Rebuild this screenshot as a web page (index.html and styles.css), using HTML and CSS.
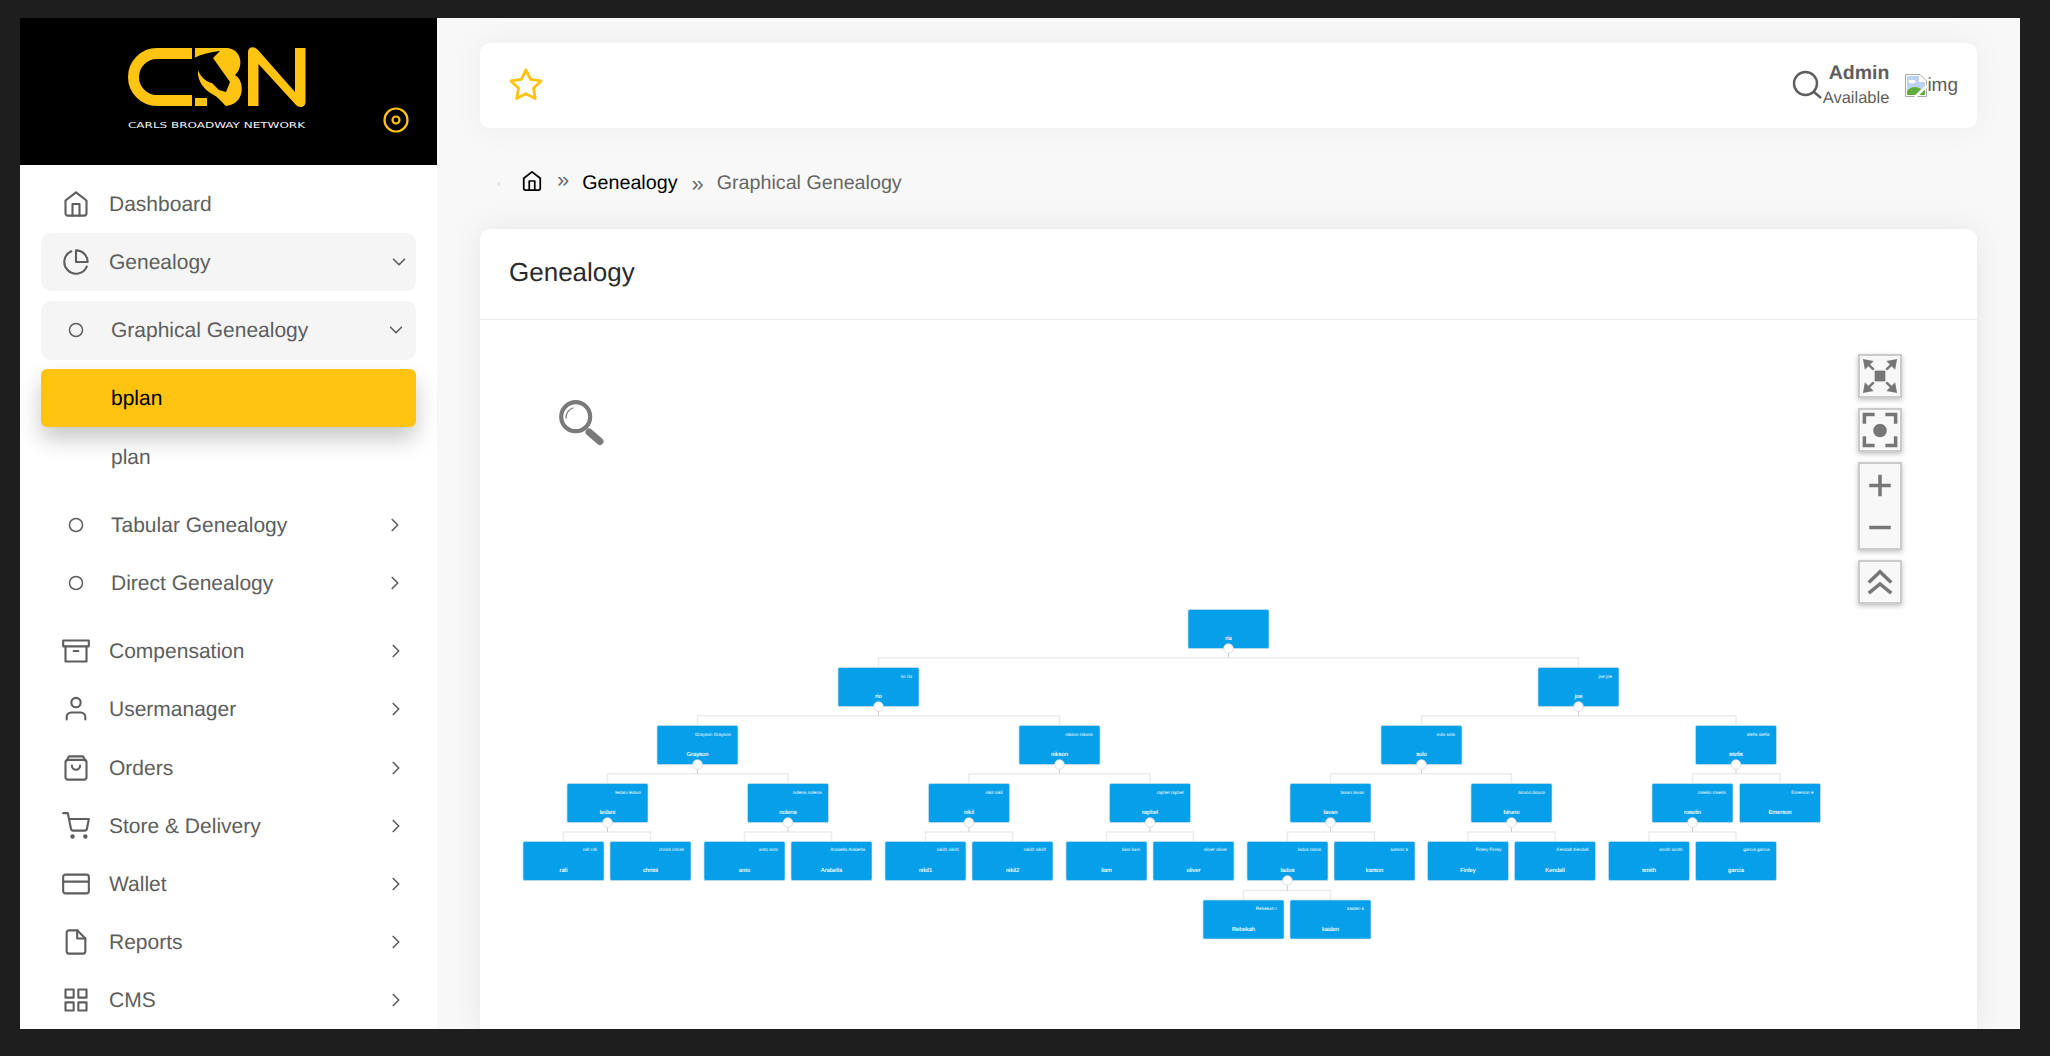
FILE: index.html
```html
<!DOCTYPE html>
<html lang="en">
  <head>
    <meta charset="UTF-8" />
    <meta name="viewport" content="width=device-width, initial-scale=1.0" />
    <title>Genealogy</title>
    <link rel="stylesheet" href="styles.css">
  </head>
  <body>
    <div class="app">
      <aside class="sidebar">
        <div class="sidebar-head">
          <svg class="logo" viewBox="20 18 417 147" width="417" height="147">
            <path class="logo-c" d="M192 53.5H157a23.5 23.5 0 0 0 0 47H192"/>
            <path class="logo-y" d="M195 48H226C237 48 242 58 240 66C239 70 238 72 235 75C245 80 246 106 224 106H195V98H194Z"/>
            <path class="logo-k" d="M194 58C202 54 210 52 220 51L213 58L230 82L226 92L219 90L212 83C206 82 200 76 198 70L194 70Z"/>
            <path class="logo-k" d="M194 70H198C197 82 205 90 212 94C218 97 222 102 226 106.500H207V98H194Z"/>
            <path class="logo-y" d="M248 52C248 46 255 46 258 50L295 92V48H305.500V102C305.500 108 299 108 296 105L258.500 64V106H248Z"/>
            <text class="logo-text" x="128" y="127.700" textLength="177" lengthAdjust="spacingAndGlyphs">CARLS BROADWAY NETWORK</text>
            <circle class="logo-ring" cx="396" cy="120" r="11.500"/>
            <circle class="logo-ring" cx="396" cy="120" r="3.500"/>
          </svg>
        </div>
        <nav class="menu">
          <a class="row">
            <svg class="ico" viewBox="0 0 24 24"><path d="M3 9l9-7 9 7v11a2 2 0 0 1-2 2H5a2 2 0 0 1-2-2z"/><polyline points="9 22 9 12 15 12 15 22"/></svg>
            <span>Dashboard</span>
          </a>
          <a class="row open">
            <svg class="ico" viewBox="0 0 24 24"><path d="M21.21 15.89A10 10 0 1 1 8 2.83"/><path d="M22 12A10 10 0 0 0 12 2v10z"/></svg>
            <span>Genealogy</span>
            <svg class="chev chev-top" viewBox="0 0 24 24"><polyline points="6 9 12 15 18 9"/></svg>
          </a>
          <div class="submenu">
            <a class="row sub open">
              <svg class="dot" viewBox="0 0 16 16"><circle cx="8" cy="8" r="6.500"/></svg>
              <span>Graphical Genealogy</span>
              <svg class="chev chev-sub" viewBox="0 0 24 24"><polyline points="6 9 12 15 18 9"/></svg>
            </a>
            <a class="row leaf active"><span>bplan</span></a>
            <a class="row leaf"><span>plan</span></a>
            <a class="row sub tabular">
              <svg class="dot" viewBox="0 0 16 16"><circle cx="8" cy="8" r="6.500"/></svg>
              <span>Tabular Genealogy</span>
              <svg class="chev" viewBox="0 0 24 24"><polyline points="9 18 15 12 9 6"/></svg>
            </a>
            <a class="row sub">
              <svg class="dot" viewBox="0 0 16 16"><circle cx="8" cy="8" r="6.500"/></svg>
              <span>Direct Genealogy</span>
              <svg class="chev" viewBox="0 0 24 24"><polyline points="9 18 15 12 9 6"/></svg>
            </a>
          </div>
          <a class="row">
            <svg class="ico" viewBox="0 0 24 24"><polyline points="21 8 21 21 3 21 3 8"/><rect x="1" y="3" width="22" height="5"/><line x1="10" y1="12" x2="14" y2="12"/></svg>
            <span>Compensation</span>
            <svg class="chev" viewBox="0 0 24 24"><polyline points="9 18 15 12 9 6"/></svg>
          </a>
          <a class="row">
            <svg class="ico" viewBox="0 0 24 24"><path d="M20 21v-2a4 4 0 0 0-4-4H8a4 4 0 0 0-4 4v2"/><circle cx="12" cy="6.500" r="4"/></svg>
            <span>Usermanager</span>
            <svg class="chev" viewBox="0 0 24 24"><polyline points="9 18 15 12 9 6"/></svg>
          </a>
          <a class="row">
            <svg class="ico" viewBox="0 0 24 24"><rect x="3" y="5" width="18" height="17" rx="2"/><path d="M4 5.500L6 2H18L20 5.500"/><path d="M8.500 10a3.500 3.500 0 0 0 7 0"/></svg>
            <span>Orders</span>
            <svg class="chev" viewBox="0 0 24 24"><polyline points="9 18 15 12 9 6"/></svg>
          </a>
          <a class="row">
            <svg class="ico" viewBox="0 0 24 24"><circle cx="9" cy="21" r="1"/><circle cx="20" cy="21" r="1"/><path d="M1 1h4l2.680 13.390a2 2 0 0 0 2 1.610h9.720a2 2 0 0 0 2-1.610L23 6H6"/></svg>
            <span>Store &amp; Delivery</span>
            <svg class="chev" viewBox="0 0 24 24"><polyline points="9 18 15 12 9 6"/></svg>
          </a>
          <a class="row">
            <svg class="ico" viewBox="0 0 24 24"><rect x="1" y="4" width="22" height="16" rx="2"/><line x1="1" y1="10" x2="23" y2="10"/></svg>
            <span>Wallet</span>
            <svg class="chev" viewBox="0 0 24 24"><polyline points="9 18 15 12 9 6"/></svg>
          </a>
          <a class="row">
            <svg class="ico" viewBox="0 0 24 24"><path d="M13 2H6a2 2 0 0 0-2 2v16a2 2 0 0 0 2 2h12a2 2 0 0 0 2-2V9z"/><polyline points="13 2 13 9 20 9"/></svg>
            <span>Reports</span>
            <svg class="chev" viewBox="0 0 24 24"><polyline points="9 18 15 12 9 6"/></svg>
          </a>
          <a class="row">
            <svg class="ico" viewBox="0 0 24 24"><rect x="3" y="3" width="7" height="7"/><rect x="14" y="3" width="7" height="7"/><rect x="14" y="14" width="7" height="7"/><rect x="3" y="14" width="7" height="7"/></svg>
            <span>CMS</span>
            <svg class="chev" viewBox="0 0 24 24"><polyline points="9 18 15 12 9 6"/></svg>
          </a>
        </nav>
      </aside>

      <main class="main">
        <header class="topbar">
          <svg class="star" viewBox="0 0 24 24"><polygon points="12 2 15.090 8.260 22 9.270 17 14.140 18.180 21.020 12 17.770 5.820 21.020 7 14.140 2 9.270 8.910 8.260 12 2"/></svg>
          <div class="top-right">
            <svg class="top-search" viewBox="0 0 30 30"><circle cx="13.500" cy="13.500" r="11.500"/><line x1="22" y1="22" x2="29" y2="28"/></svg>
            <div class="user">
              <b>Admin</b>
              <span>Available</span>
            </div>
            <div class="broken">
              <svg viewBox="0 0 22 23" width="22" height="23">
                <path class="broken-page" d="M.5.5H15L21.500 7V22.500H.5Z"/>
                <path class="broken-sky" d="M2 2H14V8H20V15L13 21H2Z"/>
                <path class="broken-hill" d="M2 21V17C6 12 12 12 16 15L11 21Z"/>
                <path class="broken-hill" d="M14 21L20 15V21Z"/>
                <ellipse class="broken-cloud" cx="7" cy="7.500" rx="3.500" ry="1.800"/>
                <line class="broken-tear" x1="10" y1="23" x2="22" y2="12"/>
              </svg>
              <span>img</span>
            </div>
          </div>
        </header>

        <div class="crumbs">
          <i class="crumb-mark"></i>
          <svg class="crumb-home" viewBox="0 0 24 24"><path d="M3 9l9-7 9 7v11a2 2 0 0 1-2 2H5a2 2 0 0 1-2-2z"/><polyline points="9 22 9 12 15 12 15 22"/></svg>
          <span class="crumb-sep first">»</span>
          <span class="crumb-link">Genealogy</span>
          <span class="crumb-sep">»</span>
          <span class="crumb-now">Graphical Genealogy</span>
        </div>

        <section class="card">
          <div class="card-head">Genealogy</div>
          <div class="card-body">
            <svg class="tree" viewBox="480 320 1497 709" width="1497" height="709">
              <!-- magnifier -->
              <g class="lens">
                <circle cx="575.700" cy="416.700" r="14.500"/>
                <path class="lens-shine" d="M566 418a10 10 0 0 1 7-10"/>
                <line x1="589" y1="432" x2="600" y2="441.500"/>
              </g>

              <!-- links -->
              <path class="link" d="M878.500 667.500V657.700H1578.500V667.500"/>
              <path class="link" d="M697.500 725.500V715.700H1059.500V725.500"/>
              <path class="link" d="M1421.500 725.500V715.700H1736V725.500"/>
              <path class="link" d="M607.500 783.500V773.700H788V783.500"/>
              <path class="link" d="M969 783.500V773.700H1150V783.500"/>
              <path class="link" d="M1330.500 783.500V773.700H1511.500V783.500"/>
              <path class="link" d="M1692.500 783.500V773.700H1780V783.500"/>
              <path class="link" d="M563.500 841.500V832H650.500V841.500"/>
              <path class="link" d="M744.500 841.500V832H831.500V841.500"/>
              <path class="link" d="M925.500 841.500V832H1012.500V841.500"/>
              <path class="link" d="M1106.500 841.500V832H1193.500V841.500"/>
              <path class="link" d="M1287.500 841.500V832H1374.500V841.500"/>
              <path class="link" d="M1468 841.500V832H1555V841.500"/>
              <path class="link" d="M1649 841.500V832H1736V841.500"/>
              <path class="link" d="M1243.500 900V890.500H1330.500V900"/>
              <path class="stem" d="M1228.500 648V657.700M878.500 706V715.700M1578.500 706V715.700M697.500 764V773.700M1059.500 764V773.700M1421.500 764V773.700M1736 764V773.700M607.500 822V832M788 822V832M969 822V832M1150 822V832M1330.500 822V832M1511.500 822V832M1692.500 822V832M1287.500 880V890.500"/>

              <!-- level 1 -->
              <g transform="translate(1188 609.500)"><rect class="node" width="81" height="39" rx="1.500"/><text class="name" x="40.500" y="30.700">ria</text></g>

              <!-- level 2 -->
              <g transform="translate(838 667.500)"><rect class="node" width="81" height="39" rx="1.500"/><text class="label" x="74" y="10">rio rio</text><text class="name" x="40.500" y="30.700">rio</text></g>
              <g transform="translate(1538 667.500)"><rect class="node" width="81" height="39" rx="1.500"/><text class="label" x="74" y="10">joe joe</text><text class="name" x="40.500" y="30.700">joe</text></g>

              <!-- level 3 -->
              <g transform="translate(657 725.500)"><rect class="node" width="81" height="39" rx="1.500"/><text class="label" x="74" y="10">Grayson Grayson</text><text class="name" x="40.500" y="30.700">Grayson</text></g>
              <g transform="translate(1019 725.500)"><rect class="node" width="81" height="39" rx="1.500"/><text class="label" x="74" y="10">nikson nikson</text><text class="name" x="40.500" y="30.700">nikson</text></g>
              <g transform="translate(1381 725.500)"><rect class="node" width="81" height="39" rx="1.500"/><text class="label" x="74" y="10">solo solo</text><text class="name" x="40.500" y="30.700">solo</text></g>
              <g transform="translate(1695.500 725.500)"><rect class="node" width="81" height="39" rx="1.500"/><text class="label" x="74" y="10">stefis stefis</text><text class="name" x="40.500" y="30.700">stefis</text></g>

              <!-- level 4 -->
              <g transform="translate(567 783.500)"><rect class="node" width="81" height="39" rx="1.500"/><text class="label" x="74" y="10">ledani ledani</text><text class="name" x="40.500" y="30.700">ledani</text></g>
              <g transform="translate(747.500 783.500)"><rect class="node" width="81" height="39" rx="1.500"/><text class="label" x="74" y="10">nolena nolena</text><text class="name" x="40.500" y="30.700">nolena</text></g>
              <g transform="translate(928.500 783.500)"><rect class="node" width="81" height="39" rx="1.500"/><text class="label" x="74" y="10">nikil nikil</text><text class="name" x="40.500" y="30.700">nikil</text></g>
              <g transform="translate(1109.500 783.500)"><rect class="node" width="81" height="39" rx="1.500"/><text class="label" x="74" y="10">raphel raphel</text><text class="name" x="40.500" y="30.700">raphel</text></g>
              <g transform="translate(1290 783.500)"><rect class="node" width="81" height="39" rx="1.500"/><text class="label" x="74" y="10">lavan lavan</text><text class="name" x="40.500" y="30.700">lavan</text></g>
              <g transform="translate(1471 783.500)"><rect class="node" width="81" height="39" rx="1.500"/><text class="label" x="74" y="10">biruno biruno</text><text class="name" x="40.500" y="30.700">biruno</text></g>
              <g transform="translate(1652 783.500)"><rect class="node" width="81" height="39" rx="1.500"/><text class="label" x="74" y="10">roselin roselin</text><text class="name" x="40.500" y="30.700">roselin</text></g>
              <g transform="translate(1739.500 783.500)"><rect class="node" width="81" height="39" rx="1.500"/><text class="label" x="74" y="10">Emerson e</text><text class="name" x="40.500" y="30.700">Emerson</text></g>

              <!-- level 5 -->
              <g transform="translate(523 841.500)"><rect class="node" width="81" height="39" rx="1.500"/><text class="label" x="74" y="9.500">rafi rafi</text><text class="name" x="40.500" y="30.700">rafi</text></g>
              <g transform="translate(610 841.500)"><rect class="node" width="81" height="39" rx="1.500"/><text class="label" x="74" y="9.500">christi christi</text><text class="name" x="40.500" y="30.700">christi</text></g>
              <g transform="translate(704 841.500)"><rect class="node" width="81" height="39" rx="1.500"/><text class="label" x="74" y="9.500">anto anto</text><text class="name" x="40.500" y="30.700">anto</text></g>
              <g transform="translate(791 841.500)"><rect class="node" width="81" height="39" rx="1.500"/><text class="label" x="74" y="9.500">Arabella Arabella</text><text class="name" x="40.500" y="30.700">Arabella</text></g>
              <g transform="translate(885 841.500)"><rect class="node" width="81" height="39" rx="1.500"/><text class="label" x="74" y="9.500">nikil1 nikil1</text><text class="name" x="40.500" y="30.700">nikil1</text></g>
              <g transform="translate(972 841.500)"><rect class="node" width="81" height="39" rx="1.500"/><text class="label" x="74" y="9.500">nikil2 nikil2</text><text class="name" x="40.500" y="30.700">nikil2</text></g>
              <g transform="translate(1066 841.500)"><rect class="node" width="81" height="39" rx="1.500"/><text class="label" x="74" y="9.500">liam liam</text><text class="name" x="40.500" y="30.700">liam</text></g>
              <g transform="translate(1153 841.500)"><rect class="node" width="81" height="39" rx="1.500"/><text class="label" x="74" y="9.500">oliver oliver</text><text class="name" x="40.500" y="30.700">oliver</text></g>
              <g transform="translate(1247 841.500)"><rect class="node" width="81" height="39" rx="1.500"/><text class="label" x="74" y="9.500">lados lados</text><text class="name" x="40.500" y="30.700">lados</text></g>
              <g transform="translate(1334 841.500)"><rect class="node" width="81" height="39" rx="1.500"/><text class="label" x="74" y="9.500">karson k</text><text class="name" x="40.500" y="30.700">karson</text></g>
              <g transform="translate(1427.500 841.500)"><rect class="node" width="81" height="39" rx="1.500"/><text class="label" x="74" y="9.500">Finley Finley</text><text class="name" x="40.500" y="30.700">Finley</text></g>
              <g transform="translate(1514.500 841.500)"><rect class="node" width="81" height="39" rx="1.500"/><text class="label" x="74" y="9.500">Kendall Kendall</text><text class="name" x="40.500" y="30.700">Kendall</text></g>
              <g transform="translate(1608.500 841.500)"><rect class="node" width="81" height="39" rx="1.500"/><text class="label" x="74" y="9.500">smith smith</text><text class="name" x="40.500" y="30.700">smith</text></g>
              <g transform="translate(1695.500 841.500)"><rect class="node" width="81" height="39" rx="1.500"/><text class="label" x="74" y="9.500">garcia garcia</text><text class="name" x="40.500" y="30.700">garcia</text></g>

              <!-- level 6 -->
              <g transform="translate(1203 900)"><rect class="node" width="81" height="39" rx="1.500"/><text class="label" x="74" y="9.500">Rebekah r</text><text class="name" x="40.500" y="30.700">Rebekah</text></g>
              <g transform="translate(1290 900)"><rect class="node" width="81" height="39" rx="1.500"/><text class="label" x="74" y="9.500">kaiden k</text><text class="name" x="40.500" y="30.700">kaiden</text></g>

              <!-- collapse buttons -->
              <circle class="knob" cx="1228.500" cy="648.500" r="4.800"/>
              <circle class="knob" cx="878.500" cy="706.500" r="4.800"/>
              <circle class="knob" cx="1578.500" cy="706.500" r="4.800"/>
              <circle class="knob" cx="697.500" cy="764.500" r="4.800"/>
              <circle class="knob" cx="1059.500" cy="764.500" r="4.800"/>
              <circle class="knob" cx="1421.500" cy="764.500" r="4.800"/>
              <circle class="knob" cx="1736" cy="764.500" r="4.800"/>
              <circle class="knob" cx="607.500" cy="822.500" r="4.800"/>
              <circle class="knob" cx="788" cy="822.500" r="4.800"/>
              <circle class="knob" cx="969" cy="822.500" r="4.800"/>
              <circle class="knob" cx="1150" cy="822.500" r="4.800"/>
              <circle class="knob" cx="1330.500" cy="822.500" r="4.800"/>
              <circle class="knob" cx="1511.500" cy="822.500" r="4.800"/>
              <circle class="knob" cx="1692.500" cy="822.500" r="4.800"/>
              <circle class="knob" cx="1287.500" cy="880.500" r="4.800"/>
            </svg>

            <div class="controls">
              <div class="ctrl">
                <svg viewBox="0 0 41 41">
                  <rect x="15" y="15" width="11" height="11"/>
                  <g><polygon points="3 3 14 5 5 14"/><line x1="8" y1="8" x2="14" y2="14"/></g>
                  <g transform="rotate(90 20.500 20.500)"><polygon points="3 3 14 5 5 14"/><line x1="8" y1="8" x2="14" y2="14"/></g>
                  <g transform="rotate(180 20.500 20.500)"><polygon points="3 3 14 5 5 14"/><line x1="8" y1="8" x2="14" y2="14"/></g>
                  <g transform="rotate(270 20.500 20.500)"><polygon points="3 3 14 5 5 14"/><line x1="8" y1="8" x2="14" y2="14"/></g>
                </svg>
              </div>
              <div class="ctrl">
                <svg viewBox="0 0 41 41">
                  <path class="open-line" d="M4.500 14V4.500H15M26 4.500H36.500V14M4.500 27V36.500H15M26 36.500H36.500V27"/>
                  <circle cx="20.500" cy="21" r="7"/>
                </svg>
              </div>
              <div class="ctrl ctrl-zoom">
                <svg viewBox="0 0 41 41"><path class="open-line" d="M9.500 21H31.500M20.500 10V32"/></svg>
                <svg viewBox="0 0 41 41"><path class="open-line" d="M9.500 21H31.500"/></svg>
              </div>
              <div class="ctrl">
                <svg viewBox="0 0 41 41"><path class="open-line" d="M9 21L20.500 10L32 21M9 32L20.500 22.500L32 32"/></svg>
              </div>
            </div>
          </div>
        </section>
      </main>
    </div>
  </body>
</html>
```

FILE: styles.css
```css
html,
body {
  margin: 0;
  height: 100%;
  font-family: "Liberation Sans", Arial, Helvetica, sans-serif;
  text-rendering: geometricPrecision;
  background-color: #1e1e1e;
  overflow: hidden;
}

.app {
  display: flex;
  width: 2000px;
  height: 1011px;
  margin: 18px 0 0 20px;
  overflow: hidden;
  background-color: #f8f8f8;
}

/* sidebar */
.sidebar {
  width: 417px;
  flex: none;
  background-color: white;
}

.sidebar-head {
  height: 147px;
  background-color: black;
}

.logo {
  display: block;
}

.logo-c {
  fill: none;
  stroke: #ffc312;
  stroke-width: 11;
}

.logo-y {
  fill: #ffc312;
}

.logo-k {
  fill: black;
}

.logo-text {
  fill: #f2f2f2;
  font-family: "DejaVu Sans", sans-serif;
  font-size: 8.200px;
}

.logo-ring {
  fill: none;
  stroke: #ffc312;
  stroke-width: 2.200;
}

.menu {
  display: flex;
  flex-direction: column;
  padding: 10px 21px 0;
}

.row {
  display: flex;
  align-items: center;
  height: 58.200px;
  flex: none;
  padding: 0 9px 0 21px;
  font-size: 21px;
  color: #5e5e5e;
  border-radius: 10px;
}

.row span {
  flex: 1;
  padding-top: 2px;
}

.row.open {
  background-color: #f5f5f5;
}

.ico {
  width: 28px;
  height: 28px;
  margin-right: 19px;
  flex: none;
  fill: none;
  stroke: #5e5e5e;
  stroke-width: 1.800;
  stroke-linecap: round;
  stroke-linejoin: round;
}

.chev {
  width: 22px;
  height: 22px;
  flex: none;
  fill: none;
  stroke: #5e5e5e;
  stroke-width: 1.800;
  stroke-linecap: round;
  stroke-linejoin: round;
}

.chev-top {
  margin-right: -3px;
}

.chev-sub {
  margin-right: -1px;
}

.submenu {
  display: flex;
  flex-direction: column;
  padding: 10px 0;
}

.sub {
  padding-left: 27px;
  padding-right: 10px;
}

.dot {
  width: 16px;
  height: 16px;
  margin-right: 27px;
  flex: none;
  fill: none;
  stroke: #5e5e5e;
  stroke-width: 1.500;
}

.sub.open {
  margin-bottom: 9px;
}

.leaf {
  padding-left: 70px;
}

.leaf.active {
  height: 58px;
  margin-bottom: 1px;
  color: black;
  background-color: #ffc312;
  border-radius: 6px;
  box-shadow: 0 12px 22px rgba(0, 0, 0, 0.22);
}

.tabular {
  margin-top: 10px;
}

/* main area */
.main {
  flex: 1;
  min-width: 0;
  display: flex;
  flex-direction: column;
  padding: 25px 43px 0;
}

.topbar {
  display: flex;
  align-items: center;
  justify-content: space-between;
  height: 85px;
  flex: none;
  padding: 0 19px 0 28px;
  background-color: white;
  border-radius: 10px;
  box-shadow: 0 0 30px rgba(0, 0, 0, 0.05);
}

.star {
  width: 36px;
  height: 36px;
  margin-top: -2px;
  fill: none;
  stroke: #ffc312;
  stroke-width: 1.900;
  stroke-linejoin: round;
}

.top-right {
  display: flex;
  align-items: center;
}

.top-search {
  width: 30px;
  height: 30px;
  margin: -1px 1px 0 0;
  fill: none;
  stroke: #5e5e5e;
  stroke-width: 2.400;
}

.user {
  display: flex;
  flex-direction: column;
  align-items: flex-end;
  color: #5e5e5e;
  font-size: 16.500px;
  line-height: 25px;
  margin-right: 16px;
}

.user b {
  font-size: 19.500px;
}

.broken {
  display: flex;
  align-items: center;
  color: #5e5e5e;
  font-size: 19px;
}

.broken svg {
  display: block;
}

.broken-page {
  fill: white;
  stroke: #aaa;
}

.broken-sky {
  fill: #bcd3f3;
}

.broken-hill {
  fill: #5fae3c;
}

.broken-cloud {
  fill: white;
}

.broken-tear {
  stroke: white;
  stroke-width: 2.500;
}

.crumbs {
  display: flex;
  align-items: center;
  height: 91px;
  flex: none;
  padding-top: 10px;
  font-size: 19.700px;
  color: #666;
}

.crumb-mark {
  width: 2px;
  height: 4px;
  margin: 0 21px 0 18px;
  background-color: #dfe6ea;
}

.crumb-home {
  width: 22px;
  height: 24px;
  margin-top: -6px;
  fill: none;
  stroke: black;
  stroke-width: 1.900;
  stroke-linejoin: round;
}

.crumb-sep {
  margin: 0 13px 0 14px;
  font-size: 22px;
}

.crumb-sep.first {
  margin-top: -7px;
}

.crumb-link {
  color: black;
}

.card {
  flex: 1;
  min-height: 0;
  display: flex;
  flex-direction: column;
  background-color: white;
  border-radius: 10px 10px 0 0;
  box-shadow: 0 0 30px rgba(0, 0, 0, 0.08);
}

.card-head {
  height: 87px;
  flex: none;
  display: flex;
  align-items: center;
  padding: 0 0 3px 29px;
  font-size: 26px;
  color: #2b2b2b;
  border-bottom: 1px solid #ececec;
}

.card-body {
  position: relative;
  flex: 1;
  min-height: 0;
  overflow: hidden;
}

/* tree canvas */
.tree {
  display: block;
}

.lens {
  fill: none;
  stroke: #7a7a7a;
  stroke-width: 4.200;
  stroke-linecap: round;
}

.lens .lens-shine {
  stroke-width: 1.300;
}

.lens line {
  stroke-width: 7;
}

.link {
  fill: none;
  stroke: #ebebeb;
  stroke-width: 1.400;
}

.stem {
  fill: none;
  stroke: #cfcfcf;
  stroke-width: 1;
}

.node {
  fill: #069fe9;
  stroke: #c9dfea;
  stroke-width: 0.700;
}

.label {
  fill: white;
  font-size: 4.600px;
  text-anchor: end;
}

.name {
  fill: white;
  stroke: white;
  stroke-width: 0.120;
  font-size: 5.800px;
  text-anchor: middle;
}

.knob {
  fill: white;
  stroke: #d6d6d6;
  stroke-width: 0.800;
}

/* zoom controls over the canvas */
.controls {
  position: absolute;
  top: 34px;
  right: 75px;
  display: flex;
  flex-direction: column;
  gap: 10px;
}

.ctrl {
  width: 40px;
  background-color: #f8f8f8;
  border: 2px solid #cbcbcb;
  box-shadow: 0 2px 5px rgba(0, 0, 0, 0.25);
}

.ctrl svg {
  display: block;
  width: 40px;
  height: 40px;
  fill: #777;
  stroke: #777;
  stroke-width: 0;
}

.ctrl line {
  stroke-width: 2.600;
}

.ctrl .open-line {
  fill: none;
  stroke-width: 3.600;
}

.ctrl-zoom svg {
  height: 42px;
}
```
